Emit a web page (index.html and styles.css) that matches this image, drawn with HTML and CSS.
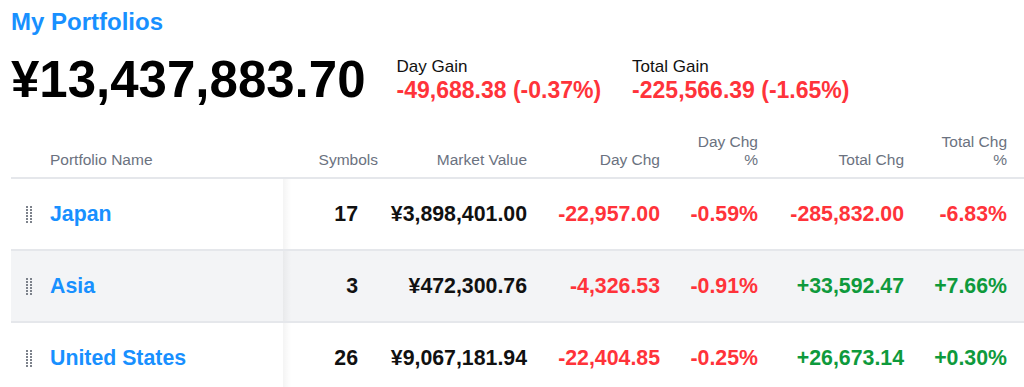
FILE: index.html
```html
<!DOCTYPE html>
<html lang="en">
<head>
<meta charset="utf-8">
<title>My Portfolios</title>
<link rel="stylesheet" href="styles.css">
</head>
<body>
<main class="page">
  <h1 class="title">My Portfolios</h1>
  <section class="summary">
    <div class="total-value">¥13,437,883.70</div>
    <div class="gain">
      <div class="gain-label">Day Gain</div>
      <div class="gain-value neg">-49,688.38 (-0.37%)</div>
    </div>
    <div class="gain">
      <div class="gain-label">Total Gain</div>
      <div class="gain-value neg">-225,566.39 (-1.65%)</div>
    </div>
  </section>

  <div class="table">
    <div class="row head">
      <div class="cell name-head">Portfolio Name</div>
      <div class="cell num">Symbols</div>
      <div class="cell num">Market Value</div>
      <div class="cell num">Day Chg</div>
      <div class="cell num">Day Chg<br>%</div>
      <div class="cell num">Total Chg</div>
      <div class="cell num last">Total Chg<br>%</div>
    </div>

    <div class="row body">
      <div class="cell name">
        <svg class="handle" width="6" height="18" viewBox="0 0 6 18"><g fill="#7d828b"><rect x="0" y="0" width="2" height="2"/><rect x="4" y="0" width="2" height="2"/><rect x="0" y="3" width="2" height="2"/><rect x="4" y="3" width="2" height="2"/><rect x="0" y="6" width="2" height="2"/><rect x="4" y="6" width="2" height="2"/><rect x="0" y="9" width="2" height="2"/><rect x="4" y="9" width="2" height="2"/><rect x="0" y="12" width="2" height="2"/><rect x="4" y="12" width="2" height="2"/><rect x="0" y="15" width="2" height="2"/><rect x="4" y="15" width="2" height="2"/></g></svg>
        <a class="link" href="#">Japan</a>
      </div>
      <div class="cell num sym">17</div>
      <div class="cell num">¥3,898,401.00</div>
      <div class="cell num neg">-22,957.00</div>
      <div class="cell num neg">-0.59%</div>
      <div class="cell num neg">-285,832.00</div>
      <div class="cell num neg last">-6.83%</div>
    </div>

    <div class="row body alt">
      <div class="cell name">
        <svg class="handle" width="6" height="18" viewBox="0 0 6 18"><g fill="#7d828b"><rect x="0" y="0" width="2" height="2"/><rect x="4" y="0" width="2" height="2"/><rect x="0" y="3" width="2" height="2"/><rect x="4" y="3" width="2" height="2"/><rect x="0" y="6" width="2" height="2"/><rect x="4" y="6" width="2" height="2"/><rect x="0" y="9" width="2" height="2"/><rect x="4" y="9" width="2" height="2"/><rect x="0" y="12" width="2" height="2"/><rect x="4" y="12" width="2" height="2"/><rect x="0" y="15" width="2" height="2"/><rect x="4" y="15" width="2" height="2"/></g></svg>
        <a class="link" href="#">Asia</a>
      </div>
      <div class="cell num sym">3</div>
      <div class="cell num">¥472,300.76</div>
      <div class="cell num neg">-4,326.53</div>
      <div class="cell num neg">-0.91%</div>
      <div class="cell num pos">+33,592.47</div>
      <div class="cell num pos last">+7.66%</div>
    </div>

    <div class="row body">
      <div class="cell name">
        <svg class="handle" width="6" height="18" viewBox="0 0 6 18"><g fill="#7d828b"><rect x="0" y="0" width="2" height="2"/><rect x="4" y="0" width="2" height="2"/><rect x="0" y="3" width="2" height="2"/><rect x="4" y="3" width="2" height="2"/><rect x="0" y="6" width="2" height="2"/><rect x="4" y="6" width="2" height="2"/><rect x="0" y="9" width="2" height="2"/><rect x="4" y="9" width="2" height="2"/><rect x="0" y="12" width="2" height="2"/><rect x="4" y="12" width="2" height="2"/><rect x="0" y="15" width="2" height="2"/><rect x="4" y="15" width="2" height="2"/></g></svg>
        <a class="link" href="#">United States</a>
      </div>
      <div class="cell num sym">26</div>
      <div class="cell num">¥9,067,181.94</div>
      <div class="cell num neg">-22,404.85</div>
      <div class="cell num neg">-0.25%</div>
      <div class="cell num pos">+26,673.14</div>
      <div class="cell num pos last">+0.30%</div>
    </div>
  </div>
</main>
</body>
</html>
```

FILE: styles.css
```css
* { box-sizing: border-box; }

html, body {
  margin: 0;
  padding: 0;
  background: #ffffff;
  overflow: hidden;
}

body {
  font-family: "Liberation Sans", Arial, Helvetica, sans-serif;
  color: #111111;
}

.page {
  padding: 8px 0 0 11px;
}

.title {
  margin: 0;
  font-size: 24px;
  line-height: 28px;
  font-weight: 700;
  color: #1890ff;
}

.summary {
  display: flex;
  align-items: flex-start;
  gap: 31px;
  margin-top: 19px;
}

.total-value {
  font-size: 51px;
  line-height: 50px;
  font-weight: 700;
  color: #000000;
}

.gain {
  padding-top: 2px;
}

.gain-label {
  font-size: 17px;
  line-height: 20px;
  color: #111111;
}

.gain-value {
  font-size: 23px;
  line-height: 26px;
  font-weight: 700;
}

.neg { color: #ff333a; }
.pos { color: #0e9a3c; }

.table {
  margin-top: 28px;
}

.row {
  display: grid;
  grid-template-columns: 272px 105px 149px 133px 98px 146px 1fr;
  border-bottom: 2px solid #e5e7eb;
}

.row.head {
  align-items: end;
}

.row.body {
  height: 72px;
  align-items: center;
}

.row.alt {
  background: #f3f4f6;
}

.cell {
  padding-right: 10px;
}

.cell.last {
  padding-right: 17px;
}

.head .cell {
  font-size: 15.5px;
  line-height: 18px;
  color: #6b7280;
  padding-bottom: 8px;
}

.head .name-head {
  padding-left: 39px;
}

.num {
  text-align: right;
}

.body .cell {
  font-size: 21.3px;
  line-height: 26px;
  font-weight: 700;
}

.body .sym {
  padding-right: 30px;
}

.cell.name {
  position: relative;
  align-self: stretch;
  display: flex;
  align-items: center;
  gap: 18px;
  padding-left: 15px;
}

.cell.name::after {
  content: "";
  position: absolute;
  top: 0;
  bottom: 0;
  left: 100%;
  width: 8px;
  background: linear-gradient(to right, rgba(0, 0, 0, 0.045), rgba(0, 0, 0, 0));
}

.handle {
  display: block;
  flex: none;
  margin-top: 1px;
}

.link {
  color: #1890ff;
  text-decoration: none;
}
```
